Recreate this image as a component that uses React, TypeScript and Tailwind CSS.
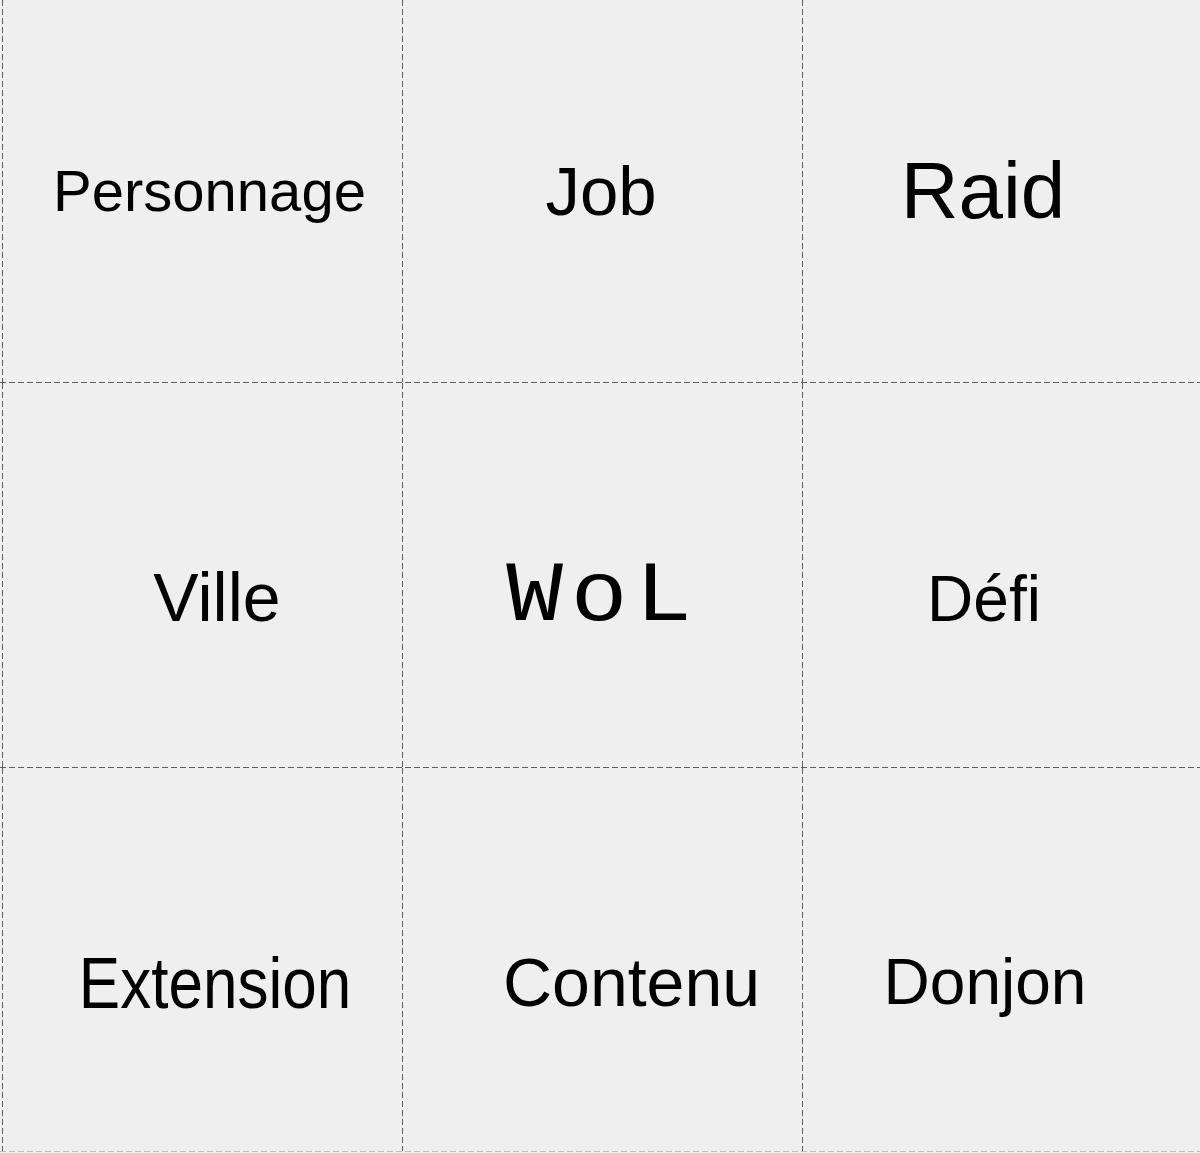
type Cell = {
    label: string;
    cellClass: string;
    textClass: string;
};

const rows: { height: string; cells: Cell[] }[] = [
    {
        height: "h-[382px]",
        cells: [
            { label: "Personnage", cellClass: "w-[399px] pl-[14px]", textClass: "text-[58px]" },
            { label: "Job", cellClass: "w-[399px] pr-[3px]", textClass: "text-[69px]" },
            { label: "Raid", cellClass: "flex-1 pr-[37px]", textClass: "text-[80px]" },
        ],
    },
    {
        height: "h-[384px]",
        cells: [
            { label: "Ville", cellClass: "w-[399px] pl-[29px] pt-[44px]", textClass: "text-[68px]" },
            { label: "WoL", cellClass: "w-[399px] pl-[1px] pt-[44px]", textClass: "text-[86px] tracking-[7px] scale-x-[1.1] font-['Liberation_Mono',monospace]" },
            { label: "Défi", cellClass: "flex-1 pr-[35px] pt-[48px]", textClass: "text-[64px]" },
        ],
    },
    {
        height: "h-[383px]",
        cells: [
            { label: "Extension", cellClass: "w-[399px] pl-[25px] pt-[46px]", textClass: "text-[62px] scale-y-[1.17]" },
            { label: "Contenu", cellClass: "w-[399px] pl-[58px] pt-[44px]", textClass: "text-[68px]" },
            { label: "Donjon", cellClass: "flex-1 pr-[33px] pt-[44px]", textClass: "text-[64px]" },
        ],
    },
];

const VLine = () => (
    <div className="w-px shrink-0 self-stretch bg-[repeating-linear-gradient(180deg,#5e5e5e_0_6px,transparent_6px_9px)]" />
);

const HLine = ({ light }: { light?: boolean }) => (
    <div
        className={
            light
                ? "h-px w-full shrink-0 bg-[repeating-linear-gradient(90deg,#bdbdbd_0_6px,transparent_6px_9px)]"
                : "h-px w-full shrink-0 bg-[repeating-linear-gradient(90deg,#5e5e5e_0_6px,transparent_6px_9px)]"
        }
    />
);

export default function App() {
    return (
        <div className="w-[1200px] h-[1153px] bg-[#efefef] overflow-hidden flex flex-col font-['Liberation_Sans',Arial,sans-serif] text-black">
            {rows.map((row, i) => (
                <div key={i} className="flex flex-col">
                    <div className={`flex ${row.height}`}>
                        <div className="w-[2px] shrink-0" />
                        <VLine />
                        {row.cells.map((c, j) => (
                            <div key={c.label} className="contents">
                                <div className={`flex items-center justify-center ${c.cellClass}`}>
                                    <span className={`leading-none whitespace-nowrap ${c.textClass}`}>{c.label}</span>
                                </div>
                                {j < 2 && <VLine />}
                            </div>
                        ))}
                    </div>
                    <HLine light={i === 2} />
                </div>
            ))}
        </div>
    );
}
